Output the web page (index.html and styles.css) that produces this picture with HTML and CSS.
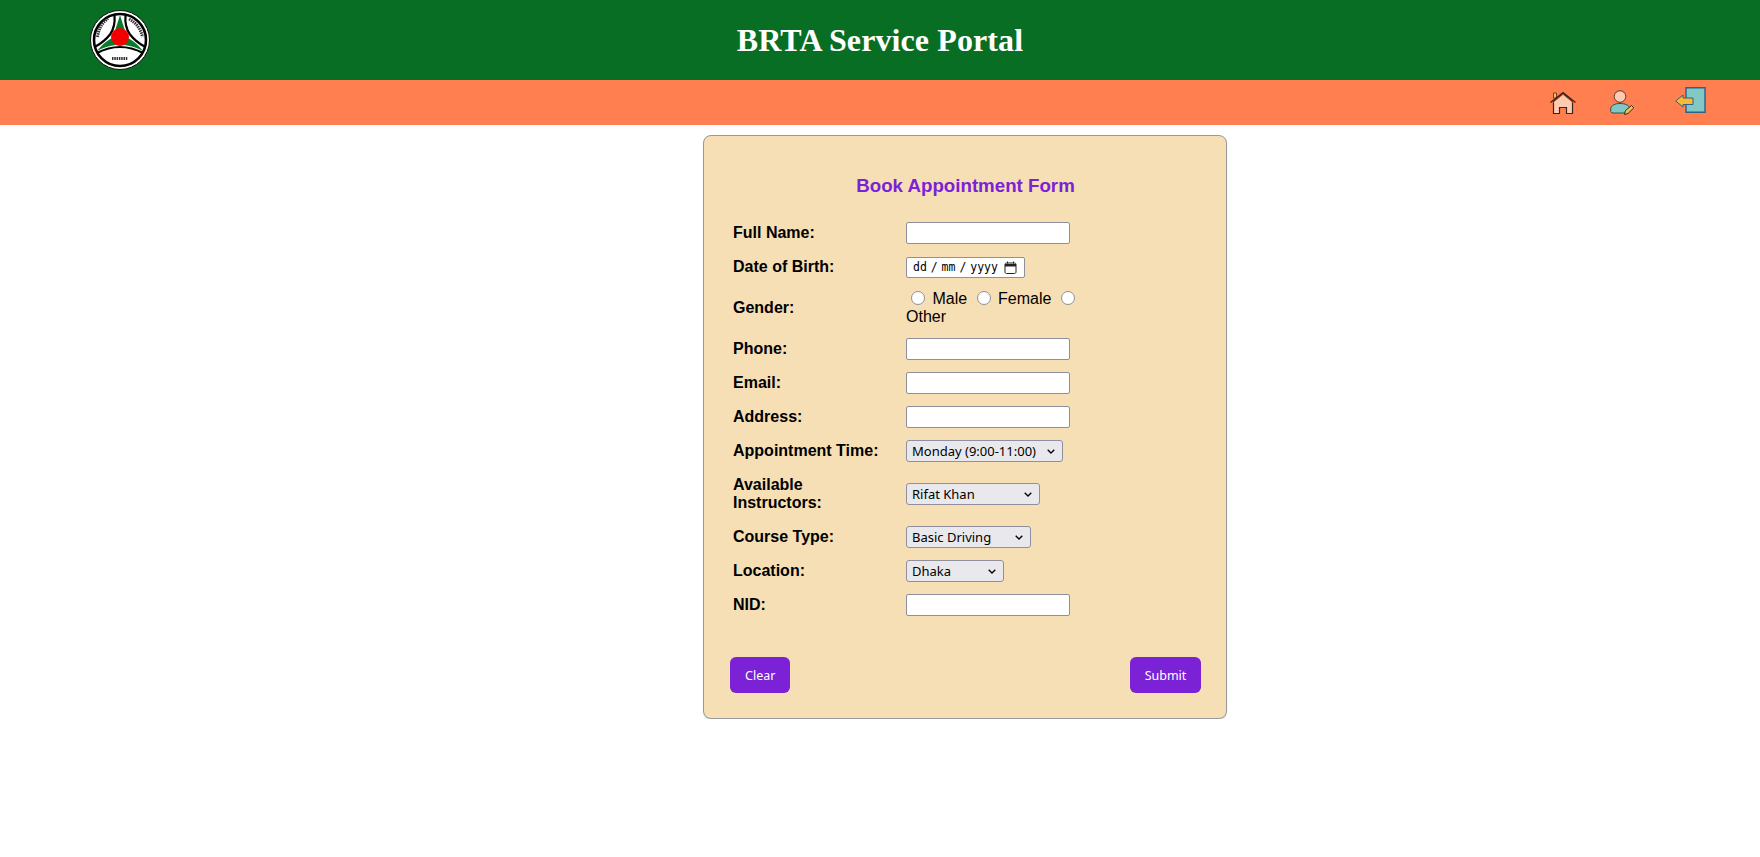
FILE: index.html
```html
<!DOCTYPE html>
<html>

<head>
    <title>BRTA Service Portal</title>
    <link rel="stylesheet" href="styles.css">
</head>

<body>
    <header class="top-bar">
        <svg class="logo" viewBox="0 0 60 60" width="60" height="60">
            <circle cx="30" cy="30" r="29.500" fill="#fff" stroke="#111" stroke-width="1"/>
            <circle cx="30" cy="30" r="26" fill="#fff" stroke="#000" stroke-width="2.600"/>
            <path d="M30 5 24 24H36Z" fill="#0a7a2c"/>
            <path d="M7 41 Q13 33 22 28 L26 35 Q16 36 7 41Z" fill="#0a7a2c"/>
            <path d="M53 41 Q47 33 38 28 L34 35 Q44 36 53 41Z" fill="#0a7a2c"/>
            <path d="M24.500 5 Q25.500 17 20 24.500 Q14 32 5.500 36.500" fill="none" stroke="#000" stroke-width="2.200"/>
            <path d="M35.500 5 Q34.500 17 40 24.500 Q46 32 54.500 36.500" fill="none" stroke="#000" stroke-width="2.200"/>
            <path d="M7 43 Q30 31 53 43" fill="none" stroke="#000" stroke-width="2.200"/>
            <circle cx="30" cy="27" r="9" fill="#f40000"/>
            <path d="M7.500 27 Q9 15 18 8.500" fill="none" stroke="#333" stroke-width="3" stroke-dasharray="1.500 .8"/>
            <path d="M39 9 Q50 15 52.500 27" fill="none" stroke="#333" stroke-width="3" stroke-dasharray="1.500 .8"/>
            <path d="M22 48.500 H38" fill="none" stroke="#333" stroke-width="3" stroke-dasharray="1.500 .8"/>
        </svg>
        <h1 class="site-title">BRTA Service Portal</h1>
    </header>

    <nav class="icon-bar">
        <a href="#" class="icon-link home-link">
            <svg viewBox="0 0 26 23" width="26" height="23">
                <path d="M3.500 2H6.500V7H3.500Z" fill="#f2c14e" stroke="#4a3028" stroke-width=".8"/>
                <path d="M3.500 10.500 13 2.500 22.500 10.500V22.500H16.500V16.500H9.500V22.500H3.500Z" fill="#fdcbb0" stroke="#3a2420" stroke-width="1.200"/>
                <path d="M.5 11.500 13 1.500 25.500 11.500" fill="none" stroke="#3a2420" stroke-width="1.300"/>
                <path d="M3 11.500 13 3.500 23 11.500" fill="none" stroke="#e0562a" stroke-width=".8"/>
            </svg>
        </a>
        <a href="#" class="icon-link user-link">
            <svg viewBox="0 0 24 25" width="24" height="25">
                <circle cx="10" cy="6.500" r="5.800" fill="#fdcbb0" stroke="#5a3a30" stroke-width="1"/>
                <path d="M.7 21.500V19C.7 15.500 5 13.500 10 13.500S18.500 15 19.500 17.500L15 23H2Z" fill="#7fc8c4" stroke="#3a4a50" stroke-width="1"/>
                <path d="M14.500 24.500 15.500 20.500 21.500 15.500 23.800 17.800 18 23.500Z" fill="#f2c14e" stroke="#3a2a20" stroke-width="1"/>
            </svg>
        </a>
        <a href="#" class="icon-link exit-link">
            <svg viewBox="0 0 31 26" width="31" height="26">
                <path d="M11 .7H30V25.300H11Z" fill="#82c9c4" stroke="#2f5f8a" stroke-width="1.400"/>
                <path d="M.7 14 8 8V11H18V17.500H8V20Z" fill="#f9b934" stroke="#2f5f8a" stroke-width="1"/>
            </svg>
        </a>
    </nav>

    <div class="form-box">
        <h3 class="form-title">Book Appointment Form</h3>
        <form>
            <table class="form-table">
                <tr>
                    <td class="label">Full Name:</td>
                    <td><input type="text"></td>
                </tr>
                <tr>
                    <td class="label">Date of Birth:</td>
                    <td>
                        <div class="date-box">
                            <span class="date-text">dd / mm / yyyy</span>
                            <svg viewBox="0 0 13 13" width="13" height="13">
                                <path d="M1 3.500C1 2.700 1.700 2 2.500 2H10.500C11.300 2 12 2.700 12 3.500V11C12 11.800 11.300 12.500 10.500 12.500H2.500C1.700 12.500 1 11.800 1 11Z" fill="none" stroke="#222" stroke-width="1"/>
                                <path d="M1 3H12V5.500H1Z" fill="#222"/>
                                <path d="M3.500 .5V2.500M9.500 .5V2.500" stroke="#222" stroke-width="1"/>
                            </svg>
                        </div>
                    </td>
                </tr>
                <tr class="gender-row">
                    <td class="label">Gender:</td>
                    <td class="radios">
                        <input type="radio" name="gender"> Male
                        <input type="radio" name="gender"> Female
                        <input type="radio" name="gender"> Other
                    </td>
                </tr>
                <tr>
                    <td class="label">Phone:</td>
                    <td><input type="text"></td>
                </tr>
                <tr>
                    <td class="label">Email:</td>
                    <td><input type="text"></td>
                </tr>
                <tr>
                    <td class="label">Address:</td>
                    <td><input type="text"></td>
                </tr>
                <tr>
                    <td class="label">Appointment Time:</td>
                    <td>
                        <select class="time">
                            <option>Monday (9:00-11:00)</option>
                        </select>
                    </td>
                </tr>
                <tr class="instructor-row">
                    <td class="label">Available<br>Instructors:</td>
                    <td>
                        <select class="instructor">
                            <option>Rifat Khan</option>
                        </select>
                    </td>
                </tr>
                <tr>
                    <td class="label">Course Type:</td>
                    <td>
                        <select class="course">
                            <option>Basic Driving</option>
                        </select>
                    </td>
                </tr>
                <tr>
                    <td class="label">Location:</td>
                    <td>
                        <select class="location">
                            <option>Dhaka</option>
                        </select>
                    </td>
                </tr>
                <tr>
                    <td class="label">NID:</td>
                    <td><input type="text"></td>
                </tr>
            </table>
            <div class="btn-row">
                <button type="reset" class="btn">Clear</button>
                <button type="submit" class="btn submit-btn">Submit</button>
            </div>
        </form>
    </div>
</body>

</html>
```

FILE: styles.css
```css
/* Page */
body {
  margin: 0;
  font-family: "Liberation Sans", Arial, sans-serif;
  background-color: #fff;
}

/* Green title bar */
.top-bar {
  height: 80px;
  background-color: #086e24;
  display: grid;
  grid-template-columns: 1fr auto 1fr;
  align-items: center;
}

.logo {
  margin-left: 90px;
}

.site-title {
  margin: 0;
  color: #fff;
  font-family: "Liberation Serif", "Times New Roman", serif;
  font-size: 32px;
  font-weight: bold;
  letter-spacing: .1px;
}

/* Orange icon bar */
.icon-bar {
  height: 45px;
  padding-right: 54px;
  background-color: #ff7f50;
  display: flex;
  align-items: center;
  justify-content: flex-end;
}

.icon-link {
  display: block;
  line-height: 0;
}

.user-link {
  margin-left: 34px;
}

.exit-link {
  margin-left: 41px;
  margin-bottom: 5px;
}

/* Form card */
.form-box {
  box-sizing: border-box;
  width: 524px;
  height: 584px;
  margin: 10px 0 0 703px;
  padding: 39px 25px 0 26px;
  background-color: #f6dfb5;
  border: 1px solid #999;
  border-radius: 8px;
  box-shadow: 0 1px 1px rgba(0, 0, 0, .15);
}

.form-title {
  margin: 0 0 19px;
  text-align: center;
  color: #7b22d6;
  font-size: 18.72px;
}

.form-table {
  border-collapse: collapse;
}

.form-table tr {
  height: 34px;
}

.form-table .gender-row {
  height: 48px;
}

.form-table .instructor-row {
  height: 52px;
}

.form-table td {
  padding: 0;
  font-size: 16px;
  line-height: 18px;
  vertical-align: middle;
}

.form-table .label {
  box-sizing: border-box;
  width: 176px;
  padding-left: 3px;
  font-weight: bold;
  color: #000;
}

.form-table .radios {
  width: 176px;
}

.radios input {
  appearance: none;
  width: 14px;
  height: 14px;
  margin: 0 3px 0 5px;
  vertical-align: -1px;
  background-color: #fff;
  border: 1px solid #8f8f9d;
  border-radius: 50%;
}

.form-table input[type="text"] {
  box-sizing: border-box;
  display: block;
  width: 164px;
  height: 22px;
  border: 1px solid #8f8f9d;
  border-radius: 2px;
  background-color: #fff;
}

.date-box {
  box-sizing: border-box;
  display: flex;
  align-items: center;
  justify-content: space-between;
  width: 119px;
  height: 21px;
  padding: 0 7px 0 6px;
  background-color: #fff;
  border: 1px solid #8f8f9d;
  border-radius: 2px;
}

.date-text {
  font-family: "DejaVu Sans Mono", "Liberation Mono", monospace;
  font-size: 11.500px;
  word-spacing: -3px;
  color: #000;
}

select {
  appearance: none;
  box-sizing: border-box;
  display: block;
  height: 22px;
  padding: 0 0 0 5px;
  font-family: "Noto Sans", sans-serif;
  font-size: 13px;
  color: #000;
  background-color: #e9e9ed;
  background-image: url("data:image/svg+xml;utf8,<svg xmlns='http://www.w3.org/2000/svg' width='8' height='5'><path d='M.7.7 4 4 7.300.7' fill='none' stroke='black' stroke-width='1.300'/></svg>");
  background-repeat: no-repeat;
  background-position: right 7px center;
  border: 1px solid #8f8f9d;
  border-radius: 3px;
}

.time {
  width: 157px;
}

.instructor {
  width: 134px;
}

.course {
  width: 125px;
}

.location {
  width: 98px;
}

/* Buttons */
.btn-row {
  display: flex;
  justify-content: space-between;
  margin-top: 35px;
}

.btn {
  height: 36px;
  padding: 0 15px;
  border: none;
  border-radius: 6px;
  background-color: #7b22d6;
  color: #fff;
  font-family: "Noto Sans", sans-serif;
  font-size: 12.500px;
}

.submit-btn {
  width: 71px;
  padding: 0;
}
```
